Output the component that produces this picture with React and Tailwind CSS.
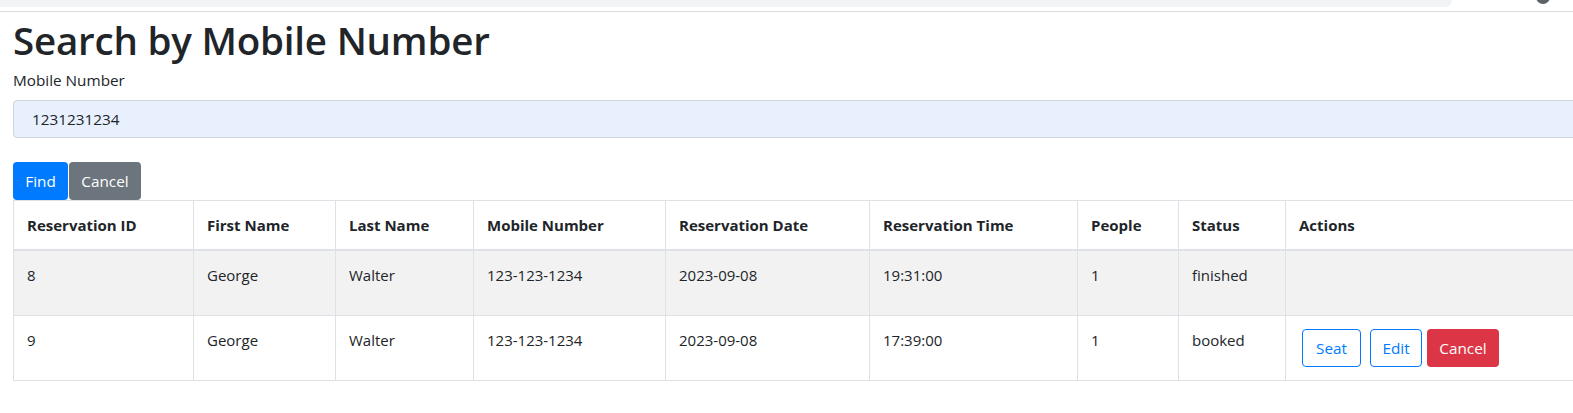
import React from 'react';

const columns = [
  { label: 'Reservation ID', w: 'w-[180px]' },
  { label: 'First Name', w: 'w-[142px]' },
  { label: 'Last Name', w: 'w-[138px]' },
  { label: 'Mobile Number', w: 'w-[192px]' },
  { label: 'Reservation Date', w: 'w-[204px]' },
  { label: 'Reservation Time', w: 'w-[208px]' },
  { label: 'People', w: 'w-[101px]' },
  { label: 'Status', w: 'w-[107px]' },
  { label: 'Actions', w: 'w-[400px]' },
];

const reservations = [
  { id: 8, first: 'George', last: 'Walter', mobile: '123-123-1234', date: '2023-09-08', time: '19:31:00', people: 1, status: 'finished' },
  { id: 9, first: 'George', last: 'Walter', mobile: '123-123-1234', date: '2023-09-08', time: '17:39:00', people: 1, status: 'booked' },
];

const cell = 'border border-[#dee2e6] px-[13px] py-3 align-top';

const App = () => {
  return (
    <div className="w-[1573px] h-[413px] overflow-hidden bg-white text-[#212529] font-['Open_Sans',sans-serif]">
      {/* leftover browser chrome */}
      <div className="relative h-[12px] border-b border-[#dadce0]">
        <div className="w-[1452px] h-[7px] bg-[#f1f3f4] rounded-br-[10px]"></div>
        <div className="absolute left-[1536px] -top-[10px] w-[14px] h-[14px] rounded-full bg-[#5f6368]"></div>
      </div>

      <div className="pl-[13px] w-[1700px]">
        <h1 className="text-[38.5px] leading-[48px] font-semibold tracking-[-0.2px] mt-[4px]">Search by Mobile Number</h1>

        <label className="block text-[15.3px] leading-6 mt-[4px]">Mobile Number</label>
        <input
          type="text"
          defaultValue="1231231234"
          className="block mt-[8px] w-full h-[38px] px-[18px] text-[15.3px] bg-[#e8f0fe] border border-[#ced4da] rounded-[4px] outline-none"
        />

        <div className="flex mt-[24px]">
          <button className="h-[38px] w-[55px] text-[15.3px] text-white bg-[#007bff] rounded-[4px]">Find</button>
          <button className="h-[38px] w-[72px] ml-px text-[15.3px] text-white bg-[#6c757d] rounded-[4px]">Cancel</button>
        </div>

        <table className="border-collapse table-fixed w-[1672px] text-[15px] leading-6">
          <thead>
            <tr className="h-[49px]">
              {columns.map((c) => (
                <th key={c.label} className={`${c.w} ${cell} border-b-2 text-left font-bold`}>
                  {c.label}
                </th>
              ))}
            </tr>
          </thead>
          <tbody>
            {reservations.map((r, i) => (
              <tr key={r.id} className={i % 2 === 0 ? 'h-[65px] bg-[#f2f2f2]' : 'h-[65px] bg-white'}>
                <td className={cell}>{r.id}</td>
                <td className={cell}>{r.first}</td>
                <td className={cell}>{r.last}</td>
                <td className={cell}>{r.mobile}</td>
                <td className={cell}>{r.date}</td>
                <td className={cell}>{r.time}</td>
                <td className={cell}>{r.people}</td>
                <td className={cell}>{r.status}</td>
                <td className="border border-[#dee2e6] pl-[16px] py-0 align-middle">
                  {r.status === 'booked' && (
                    <div className="flex items-center">
                      <button className="h-[38px] w-[59px] text-[15.3px] text-[#007bff] border border-[#007bff] rounded-[4px]">Seat</button>
                      <button className="h-[38px] w-[52px] ml-[9px] text-[15.3px] text-[#007bff] border border-[#007bff] rounded-[4px]">Edit</button>
                      <button className="h-[38px] w-[72px] ml-[5px] text-[15.3px] text-white bg-[#dc3545] rounded-[4px]">Cancel</button>
                    </div>
                  )}
                </td>
              </tr>
            ))}
          </tbody>
        </table>
      </div>
    </div>
  );
};

export default App;
